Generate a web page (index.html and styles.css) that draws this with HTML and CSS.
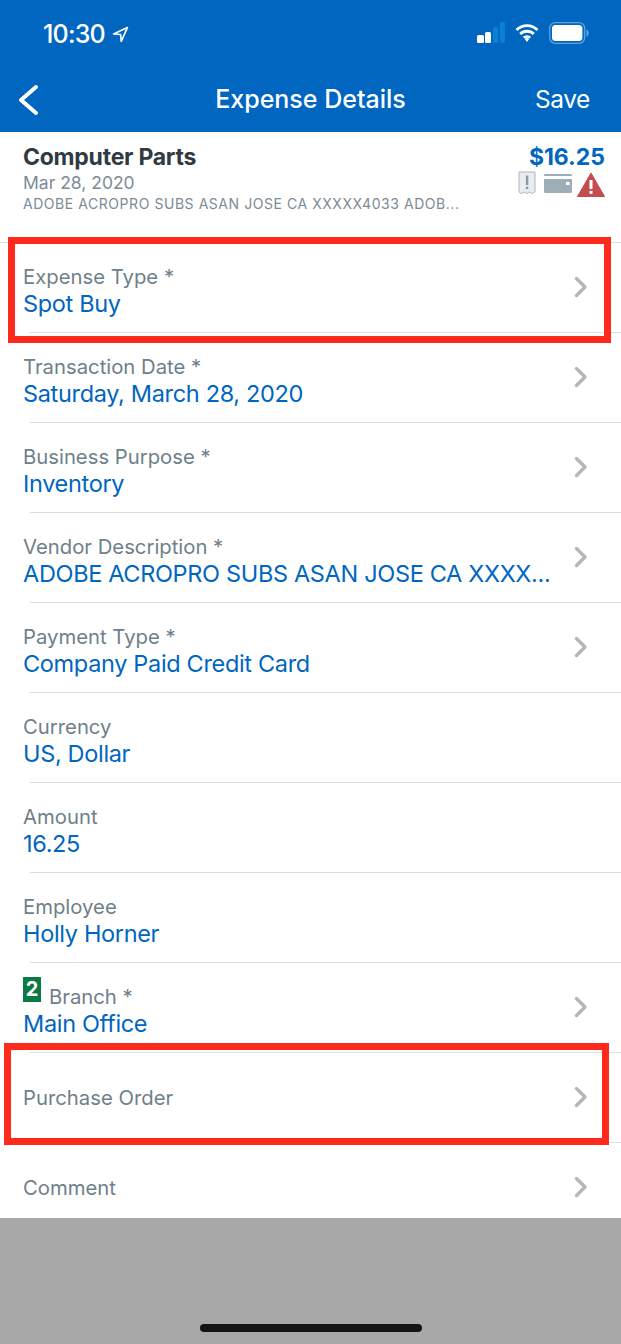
FILE: index.html
```html
<!DOCTYPE html>
<html lang="en">
<head>
<meta charset="UTF-8" />
<meta name="viewport" content="width=device-width, initial-scale=1" />
<title>Expense Details</title>
<link rel="stylesheet" href="styles.css">
</head>
<body>
  <header class="header">
    <div class="status-bar">
      <div class="clock">
        <span>10:30</span>
        <svg class="icon-location" viewBox="0 0 16 16"><path d="M14.500 1.500 1.500 7.600l6.600.4.6 6.500z" fill="none" stroke="#fff" stroke-width="1.500" stroke-linejoin="round"/></svg>
      </div>
      <div class="status-icons">
        <svg class="icon-signal" viewBox="0 0 28 21">
          <rect x="0" y="13" width="7" height="8" rx="1.500" fill="#fff"/>
          <rect x="8" y="10" width="6" height="11" rx="1.500" fill="#fff"/>
          <rect x="16" y="5" width="5" height="16" rx="1.500" fill="#0a82cf"/>
          <rect x="23" y="0" width="5" height="21" rx="1.500" fill="#0a82cf"/>
        </svg>
        <svg class="icon-wifi" viewBox="0 0 24 20">
          <path d="M1.500 7a15 15 0 0 1 21 0M5.200 11a9.800 9.800 0 0 1 13.600 0M8.800 14.800a4.800 4.800 0 0 1 6.400 0" fill="none" stroke="#fff" stroke-width="2.800"/>
          <path d="M9.800 16 12 19l2.200-3a3.400 3.400 0 0 0-4.400 0z" fill="#fff"/>
        </svg>
        <svg class="icon-battery" viewBox="0 0 40 22">
          <rect x="0.700" y="0.700" width="35" height="20.600" rx="5.500" fill="none" stroke="#5fa3dc" stroke-width="1.300"/>
          <rect x="3" y="3" width="30.400" height="16" rx="3.500" fill="#fff"/>
          <path d="M37.500 7.500c1.500.4 2.200 1.900 2.200 3.500s-.7 3.100-2.200 3.500z" fill="#5fa3dc"/>
        </svg>
      </div>
    </div>
    <nav class="nav-bar">
      <svg class="icon-back" viewBox="0 0 22 32"><path d="M19 3 4 16l15 13" fill="none" stroke="#fff" stroke-width="4" stroke-linecap="round" stroke-linejoin="round"/></svg>
      <h1>Expense Details</h1>
      <span class="save">Save</span>
    </nav>
  </header>

  <main class="content">
    <section class="summary">
      <div class="summary-text">
        <h2>Computer Parts</h2>
        <div class="summary-date">Mar 28, 2020</div>
        <div class="summary-desc">ADOBE ACROPRO SUBS ASAN JOSE CA XXXXX4033 ADOB...</div>
      </div>
      <div class="summary-side">
        <div class="summary-amount">$16.25</div>
        <div class="summary-icons">
          <svg class="icon-receipt" viewBox="0 0 18 24">
            <path d="M1 1h16v20l-2.600 1.600-2.700-1.600-2.700 1.600-2.700-1.600-2.700 1.600L1 21z" fill="#e9edf0" stroke="#a9b7c0" stroke-width="1"/>
            <rect x="7.900" y="4.500" width="2.400" height="9.500" fill="#8b9aa4"/>
            <rect x="7.900" y="15.600" width="2.400" height="2.600" fill="#8b9aa4"/>
          </svg>
          <svg class="icon-card" viewBox="0 0 28 19">
            <path d="M1.500 0h25A1.500 1.500 0 0 1 28 1.500V2H0v-.5A1.500 1.500 0 0 1 1.500 0z" fill="#9eaeb9"/>
            <path d="M0 5h28v12.500a1.500 1.500 0 0 1-1.500 1.500h-25A1.500 1.500 0 0 1 0 17.500z" fill="#9eaeb9"/>
            <rect x="22" y="8" width="3.500" height="3" fill="#fff"/>
          </svg>
          <svg class="icon-warning" viewBox="0 0 28 25">
            <path d="M14 1 27.500 24.500H.5z" fill="#c44d4f" stroke="#c44d4f" stroke-width="1" stroke-linejoin="round"/>
            <rect x="12.500" y="8" width="3" height="9" fill="#fff"/>
            <rect x="12.500" y="18.800" width="3" height="3" fill="#fff"/>
          </svg>
        </div>
      </div>
    </section>

    <div class="row">
      <div class="row-text"><div class="row-label">Expense Type *</div><div class="row-value">Spot Buy</div></div>
      <svg class="chevron" viewBox="0 0 14 22"><path d="M2.500 2.500 11 11l-8.500 8.500" /></svg>
    </div>
    <div class="row">
      <div class="row-text"><div class="row-label">Transaction Date *</div><div class="row-value">Saturday, March 28, 2020</div></div>
      <svg class="chevron" viewBox="0 0 14 22"><path d="M2.500 2.500 11 11l-8.500 8.500" /></svg>
    </div>
    <div class="row">
      <div class="row-text"><div class="row-label">Business Purpose *</div><div class="row-value">Inventory</div></div>
      <svg class="chevron" viewBox="0 0 14 22"><path d="M2.500 2.500 11 11l-8.500 8.500" /></svg>
    </div>
    <div class="row">
      <div class="row-text"><div class="row-label">Vendor Description *</div><div class="row-value">ADOBE ACROPRO SUBS ASAN JOSE CA XXXX...</div></div>
      <svg class="chevron" viewBox="0 0 14 22"><path d="M2.500 2.500 11 11l-8.500 8.500" /></svg>
    </div>
    <div class="row">
      <div class="row-text"><div class="row-label">Payment Type *</div><div class="row-value">Company Paid Credit Card</div></div>
      <svg class="chevron" viewBox="0 0 14 22"><path d="M2.500 2.500 11 11l-8.500 8.500" /></svg>
    </div>
    <div class="row">
      <div class="row-text"><div class="row-label">Currency</div><div class="row-value">US, Dollar</div></div>
    </div>
    <div class="row">
      <div class="row-text"><div class="row-label">Amount</div><div class="row-value">16.25</div></div>
    </div>
    <div class="row">
      <div class="row-text"><div class="row-label">Employee</div><div class="row-value">Holly Horner</div></div>
    </div>
    <div class="row">
      <div class="row-text"><div class="row-label row-label-badge"><span class="badge">2</span>Branch *</div><div class="row-value">Main Office</div></div>
      <svg class="chevron" viewBox="0 0 14 22"><path d="M2.500 2.500 11 11l-8.500 8.500" /></svg>
    </div>
    <div class="row">
      <div class="row-text"><div class="row-label">Purchase Order</div></div>
      <svg class="chevron" viewBox="0 0 14 22"><path d="M2.500 2.500 11 11l-8.500 8.500" /></svg>
    </div>
    <div class="row">
      <div class="row-text"><div class="row-label">Comment</div></div>
      <svg class="chevron" viewBox="0 0 14 22"><path d="M2.500 2.500 11 11l-8.500 8.500" /></svg>
    </div>
  </main>

  <footer class="footer"><div class="home-bar"></div></footer>

  <div class="highlight highlight-type"></div>
  <div class="highlight highlight-po"></div>
</body>
</html>
```

FILE: styles.css
```css
:root {
  --color-blue: #0066c0;
  --color-label: #6f808a;
  --color-line: #dcdfe2;
  --color-red: #ff2a1c;
}
* {
  box-sizing: border-box;
}
body {
  margin: 0;
  position: relative;
  display: flex;
  flex-direction: column;
  height: 1344px;
  font-family: Inter, 'Liberation Sans', sans-serif;
  background: #fff;
  overflow: hidden;
}
svg {
  display: block;
  flex: none;
}

/* header */
.header {
  height: 132px;
  background: var(--color-blue);
  color: #fff;
}
.status-bar {
  display: flex;
  justify-content: space-between;
  align-items: center;
  height: 68px;
  padding: 0 32px 0 43px;
}
.clock {
  display: flex;
  align-items: center;
  gap: 7px;
  font-size: 25px;
  font-weight: 500;
  letter-spacing: -0.8px;
}
.icon-location {
  width: 17px;
  height: 17px;
}
.status-icons {
  display: flex;
  align-items: center;
  gap: 10px;
  margin-top: -3px;
}
.icon-signal {
  width: 28px;
  height: 21px;
}
.icon-wifi {
  width: 24px;
  height: 20px;
}
.icon-battery {
  width: 40px;
  height: 22px;
}
.nav-bar {
  position: relative;
  display: flex;
  justify-content: center;
  align-items: center;
  height: 62px;
}
.nav-bar h1 {
  margin: 0;
  font-size: 25px;
  font-weight: 500;
}
.icon-back {
  position: absolute;
  left: 17px;
  top: 16px;
  width: 22px;
  height: 32px;
}
.save {
  position: absolute;
  right: 31px;
  top: 16px;
  font-size: 24.500px;
  letter-spacing: -0.4px;
}

/* summary */
.content {
  height: 1086px;
  flex: none;
  overflow: hidden;
}
.summary {
  display: flex;
  justify-content: space-between;
  height: 111px;
  padding: 11px 16px 0 23px;
  border-bottom: 1px solid var(--color-line);
}
.summary h2 {
  margin: 0 0 1px;
  font-size: 23px;
  line-height: 28px;
  font-weight: 700;
  letter-spacing: -0.25px;
  color: #2f3a42;
}
.summary-date {
  font-size: 17.500px;
  line-height: 22px;
  color: #7c8b95;
}
.summary-desc {
  font-size: 14px;
  line-height: 20px;
  letter-spacing: 0.55px;
  color: #7c8b95;
}
.summary-side {
  display: flex;
  flex-direction: column;
  align-items: flex-end;
}
.summary-amount {
  font-size: 23px;
  line-height: 28px;
  font-weight: 700;
  color: var(--color-blue);
}
.summary-icons {
  display: flex;
  align-items: flex-start;
}
.icon-receipt {
  width: 18px;
  height: 24px;
}
.icon-card {
  width: 28px;
  height: 19px;
  margin: 3px 0 0 8px;
}
.icon-warning {
  width: 28px;
  height: 25px;
  margin: 1px 0 0 5px;
}

/* rows */
.row {
  position: relative;
  display: flex;
  justify-content: space-between;
  align-items: center;
  height: 90px;
  padding: 0 33px 0 23px;
}
.row::after {
  content: "";
  position: absolute;
  left: 30px;
  right: 0;
  bottom: 0;
  height: 1px;
  background: var(--color-line);
}
.row-text {
  min-width: 0;
}
.row-label {
  font-size: 20.300px;
  line-height: 26px;
  color: var(--color-label);
  white-space: nowrap;
}
.row-label-badge {
  position: relative;
  padding-left: 26px;
}
.row-value {
  margin: 0 0 -5px;
  font-size: 23.500px;
  line-height: 28px;
  letter-spacing: -0.33px;
  color: var(--color-blue);
  white-space: nowrap;
}
.chevron {
  width: 14px;
  height: 22px;
  margin-top: -2px;
}
.chevron path {
  fill: none;
  stroke: #b6b6b6;
  stroke-width: 3.400;
  stroke-linecap: round;
  stroke-linejoin: round;
}
.badge {
  position: absolute;
  left: 0;
  top: -7px;
  width: 18px;
  height: 25px;
  background: #0a7a45;
  color: #fff;
  font-size: 20px;
  font-weight: 700;
  line-height: 25px;
  text-align: center;
}

/* footer */
.footer {
  position: relative;
  flex: 1;
  background: #a8a8a8;
}
.home-bar {
  position: absolute;
  left: 200px;
  bottom: 12px;
  width: 222px;
  height: 8px;
  border-radius: 4px;
  background: #141414;
}

/* red annotation boxes drawn over the screenshot */
.highlight {
  position: absolute;
  border: 7px solid var(--color-red);
}
.highlight-type {
  left: 8px;
  top: 237px;
  width: 603px;
  height: 106px;
}
.highlight-po {
  left: 4px;
  top: 1043px;
  width: 605px;
  height: 102px;
}
```
